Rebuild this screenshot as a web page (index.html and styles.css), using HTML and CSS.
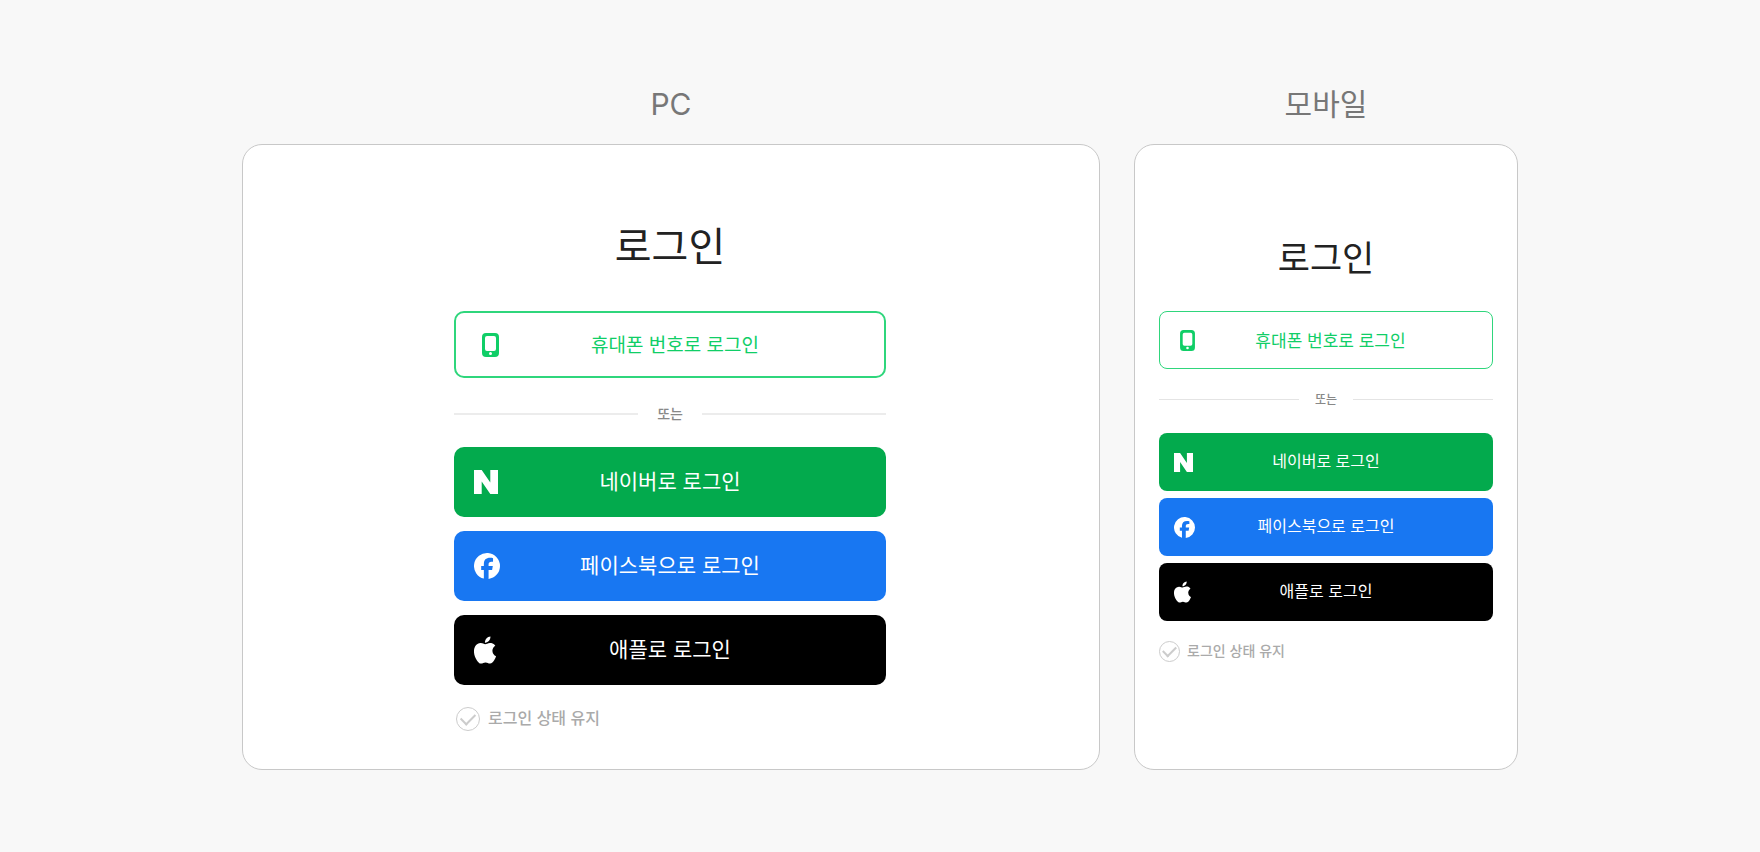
FILE: index.html
```html
<!DOCTYPE html>
<html lang="ko">
<head>
<meta charset="utf-8">
<meta name="viewport" content="width=device-width, initial-scale=1">
<title>로그인</title>
<link rel="stylesheet" href="styles.css">
</head>
<body>
<svg class="symbols" aria-hidden="true">
  <symbol id="phone" viewBox="0 0 17 24">
    <path fill-rule="evenodd" d="M4 0h9a4 4 0 0 1 4 4v16a4 4 0 0 1-4 4H4a4 4 0 0 1-4-4V4a4 4 0 0 1 4-4zM5 3a2 2 0 0 0-2 2v11a2 2 0 0 0 2 2h7a2 2 0 0 0 2-2V5a2 2 0 0 0-2-2zM8.500 19a1.500 1.500 0 1 0 0 3a1.500 1.500 0 0 0 0-3z"/>
  </symbol>
  <symbol id="naver" viewBox="0 0 24 24">
    <path d="M0 0h7.700L16.300 12.500V0H24v24h-7.700L7.700 11.500V24H0z"/>
  </symbol>
  <symbol id="facebook" viewBox="0 0 24 24">
    <path d="M24 12a12 12 0 1 0-14.900 11.650v-7.980H6.630V12H9.100v-1.580c0-4.080 1.850-5.980 5.860-5.980.76 0 2.070.15 2.610.3v3.320c-.28-.03-.78-.04-1.390-.04-1.970 0-2.730.74-2.730 2.680V12h3.920l-.67 3.670h-3.250v8.240A12 12 0 0 0 24 12z"/>
  </symbol>
  <symbol id="apple" viewBox="2.280 0 19.440 24">
    <path d="M12.152 6.896c-.948 0-2.415-1.078-3.960-1.040-2.040.027-3.910 1.183-4.961 3.014-2.117 3.675-.546 9.103 1.519 12.090 1.013 1.454 2.208 3.090 3.792 3.039 1.520-.065 2.090-.987 3.935-.987 1.831 0 2.350.987 3.960.948 1.637-.026 2.676-1.480 3.676-2.948 1.156-1.688 1.636-3.325 1.662-3.415-.039-.013-3.182-1.221-3.220-4.857-.026-3.040 2.480-4.494 2.597-4.559-1.429-2.090-3.623-2.324-4.390-2.376-2-.156-3.675 1.090-4.610 1.090zM15.530 3.830c.843-1.012 1.400-2.427 1.245-3.830-1.207.052-2.662.805-3.532 1.818-.780.896-1.454 2.338-1.273 3.714 1.338.104 2.715-.688 3.559-1.701"/>
  </symbol>
</svg>
<main class="showcase">
  <section class="device device-pc">
    <h2 class="device-name">PC</h2>
    <div class="panel">
      <form class="login">
        <h1 class="login-title">로그인</h1>
        <button type="button" class="btn btn-phone"><svg class="icon" aria-hidden="true"><use href="#phone"/></svg><span>휴대폰 번호로 로그인</span></button>
        <div class="divider"><span>또는</span></div>
        <div class="socials">
          <button type="button" class="btn btn-naver"><svg class="icon" aria-hidden="true"><use href="#naver"/></svg><span>네이버로 로그인</span></button>
          <button type="button" class="btn btn-facebook"><svg class="icon" aria-hidden="true"><use href="#facebook"/></svg><span>페이스북으로 로그인</span></button>
          <button type="button" class="btn btn-apple"><svg class="icon" aria-hidden="true"><use href="#apple"/></svg><span>애플로 로그인</span></button>
        </div>
        <div class="keep"><input type="checkbox" id="keep-pc"><label for="keep-pc">로그인 상태 유지</label></div>
      </form>
    </div>
  </section>
  <section class="device device-mobile">
    <h2 class="device-name">모바일</h2>
    <div class="panel">
      <form class="login">
        <h1 class="login-title">로그인</h1>
        <button type="button" class="btn btn-phone"><svg class="icon" aria-hidden="true"><use href="#phone"/></svg><span>휴대폰 번호로 로그인</span></button>
        <div class="divider"><span>또는</span></div>
        <div class="socials">
          <button type="button" class="btn btn-naver"><svg class="icon" aria-hidden="true"><use href="#naver"/></svg><span>네이버로 로그인</span></button>
          <button type="button" class="btn btn-facebook"><svg class="icon" aria-hidden="true"><use href="#facebook"/></svg><span>페이스북으로 로그인</span></button>
          <button type="button" class="btn btn-apple"><svg class="icon" aria-hidden="true"><use href="#apple"/></svg><span>애플로 로그인</span></button>
        </div>
        <div class="keep"><input type="checkbox" id="keep-mobile"><label for="keep-mobile">로그인 상태 유지</label></div>
      </form>
    </div>
  </section>
</main>
</body>
</html>
```
FILE: styles.css
```css
* {
  box-sizing: border-box;
}

body {
  margin: 0;
  min-height: 100vh;
  background: #f8f8f8;
  color: #222;
  font-family: "Noto Sans CJK KR", sans-serif;
}

.symbols {
  position: absolute;
  width: 0;
  height: 0;
}

.showcase {
  display: grid;
  grid-template-columns: 858fr 384fr;
  gap: 34px;
  max-width: 1276px;
  margin: 0 auto;
  padding: 84px 0 80px;
}

.device {
  display: flex;
  flex-direction: column;
  gap: 20px;
}

.device-name {
  margin: 0;
  color: #777;
  font-family: Inter, "Noto Sans CJK KR", sans-serif;
  font-size: 30px;
  font-weight: 400;
  line-height: 40px;
  text-align: center;
}

.panel {
  flex: 1;
  padding: 69px 24px 38px;
  border: 1px solid #c8c8c8;
  border-radius: 20px;
  background: #fff;
}

.login {
  display: flex;
  flex-direction: column;
  max-width: 432px;
  margin: 0 auto;
}

.device-pc .panel {
  padding-right: 26px;
}

.login-title {
  margin: 0 0 37px;
  font-size: 40px;
  font-weight: 400;
  line-height: 60px;
  text-align: center;
}

.btn {
  display: grid;
  grid-template-columns: 26px 1fr 26px;
  align-items: center;
  width: 100%;
  height: 70px;
  padding: 0 20px;
  border: 0;
  border-radius: 10px;
  color: #fff;
  font-family: inherit;
  font-size: 21px;
  font-weight: 400;
  line-height: 30px;
  text-align: center;
  cursor: pointer;
}

.btn span {
  padding-bottom: 4px;
}

.icon {
  display: block;
  width: 24px;
  height: 24px;
  fill: currentColor;
}

.btn-phone {
  grid-template-columns: 17px 1fr 17px;
  height: 67px;
  padding: 0 16px 0 26px;
  border: 2px solid #2fd67c;
  background: #fff;
  color: #10ce67;
  font-size: 19px;
}

.btn-phone span {
  padding-bottom: 2px;
}

.btn-phone .icon {
  width: 17px;
}

.btn-naver {
  background: #03aa4d;
}

.btn-facebook {
  background: #1877f2;
}

.btn-facebook .icon {
  width: 26px;
  height: 26px;
}

.btn-apple {
  background: #000;
}

.btn-apple .icon {
  width: 22px;
  height: 28px;
}

.divider {
  display: flex;
  align-items: center;
  gap: 19px;
  margin: 26px 0 23px;
  color: #888;
  font-size: 14px;
  font-weight: 500;
  line-height: 18px;
}

.divider span {
  padding-bottom: 2px;
}

.divider::before,
.divider::after {
  content: "";
  flex: 1;
  height: 2px;
  background: #ececec;
}

.socials {
  display: grid;
  gap: 14px;
}

.keep {
  display: flex;
  align-items: center;
  gap: 8px;
  margin-top: 22px;
  padding-left: 2px;
  color: #aaa;
  font-size: 16px;
  font-weight: 500;
  line-height: 20px;
}

.keep label {
  padding-bottom: 4px;
}

.keep input {
  appearance: none;
  display: grid;
  place-items: center;
  flex: none;
  width: 24px;
  height: 24px;
  margin: 0;
  border: 1px solid #ccc;
  border-radius: 50%;
}

.keep input::after {
  content: "";
  width: 12px;
  height: 7px;
  border: solid #ccc;
  border-width: 0 0 2px 2px;
  transform: translateY(-2px) rotate(-45deg);
}

.device-mobile .panel {
  padding-top: 86px;
}

.device-mobile .login-title {
  margin-bottom: 30px;
  font-size: 35px;
  line-height: 50px;
}

.device-mobile .btn {
  grid-template-columns: 21px 1fr 21px;
  height: 58px;
  padding: 0 15px;
  border-radius: 8px;
  font-size: 16px;
  line-height: 24px;
}

.device-mobile .icon {
  width: 19px;
  height: 19px;
}

.device-mobile .btn-phone {
  grid-template-columns: 15px 1fr 15px;
  padding: 0 11px 0 20px;
  border-width: 1px;
  font-size: 17px;
}

.device-mobile .btn-phone span {
  padding-bottom: 0;
}

.device-mobile .btn-phone .icon {
  width: 15px;
  height: 21px;
}

.device-mobile .btn-facebook .icon {
  width: 21px;
  height: 21px;
}

.device-mobile .btn-apple .icon {
  width: 17px;
  height: 22px;
}

.device-mobile .divider {
  gap: 16px;
  margin: 21px 0 24px;
  font-size: 12px;
}

.device-mobile .divider span {
  padding-bottom: 1px;
}

.device-mobile .divider::before,
.device-mobile .divider::after {
  height: 1px;
  background: #e4e4e4;
}

.device-mobile .socials {
  gap: 7px;
}

.device-mobile .keep {
  gap: 7px;
  margin-top: 19px;
  padding-left: 0;
  font-size: 14px;
}

.device-mobile .keep label {
  padding-bottom: 3px;
}

.device-mobile .keep input {
  width: 21px;
  height: 21px;
}

.device-mobile .keep input::after {
  width: 11px;
  height: 6px;
}

@media (max-width: 900px) {
  .showcase {
    grid-template-columns: 1fr;
    padding: 40px 20px;
  }
}
```
